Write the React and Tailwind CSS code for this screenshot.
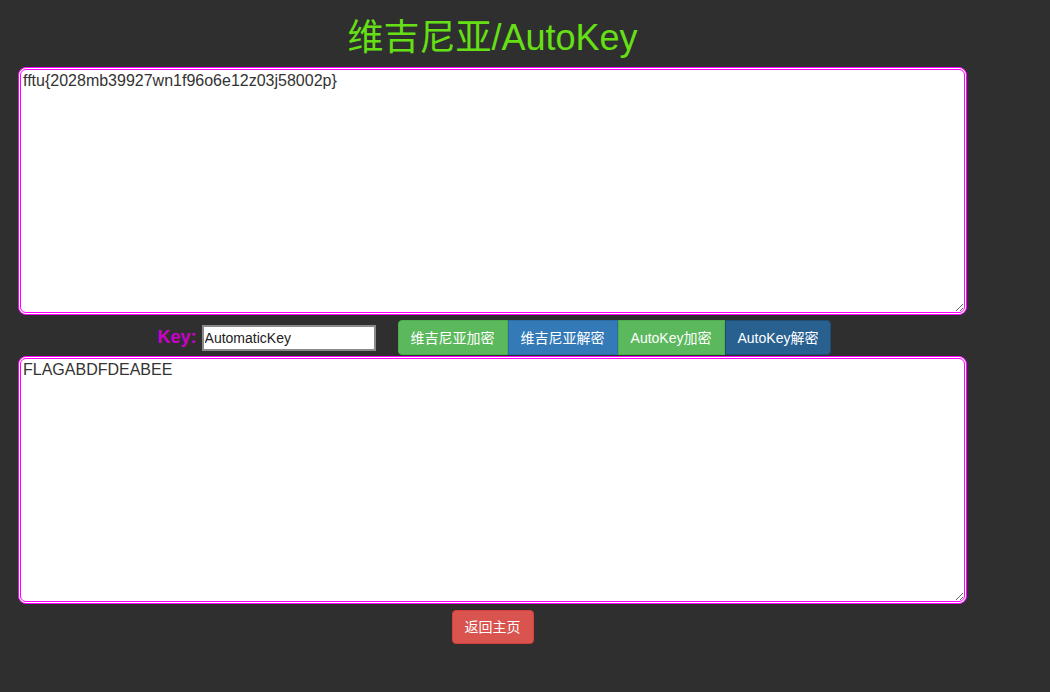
import React, { useState } from "react";

const FONT = {
  fontFamily: '"Liberation Sans", Arial, "Noto Sans CJK SC", sans-serif',
};

export default function App() {
  const [input, setInput] = useState("fftu{2028mb39927wn1f96o6e12z03j58002p}");
  const [key, setKey] = useState("AutomaticKey");
  const [output, setOutput] = useState("FLAGABDFDEABEE");

  return (
    <div className="min-h-[692px] w-full bg-[#2f2f2f]" style={FONT}>
      <div className="ml-[18px] w-[949px]">
        {/* 标题 */}
        <h1 className="flex h-[67px] items-center justify-center pt-[8px] text-[36px] leading-none text-[#66e014]">
          维吉尼亚/AutoKey
        </h1>

        {/* 输入 */}
        <textarea
          value={input}
          onChange={(e) => setInput(e.target.value)}
          spellCheck={false}
          className="block h-[248px] w-full rounded-[8px] border-[3px] border-double border-[#ff00ff] bg-white px-[2px] py-[2px] text-[16px] leading-[18px] text-[#333] outline-none"
          style={FONT}
        />

        {/* Key + 按钮 */}
        <div className="mt-[5px] flex h-[35px] items-center justify-center pl-[4px]">
          <span className="text-[18px] font-bold text-[#cc00cc]">Key:</span>
          <input
            value={key}
            onChange={(e) => setKey(e.target.value)}
            className="ml-[5px] h-[26px] w-[174px] border-2 border-[#8a8a8a] bg-white px-[1px] text-[14px] text-[#222] outline-none"
            style={FONT}
          />
          <div className="ml-[22px] flex h-[35px] text-[14px] text-white">
            <button className="rounded-l-[4px] border border-[#4cae4c] bg-[#5cb85c] px-3 leading-[20px]">
              维吉尼亚加密
            </button>
            <button className="border border-[#2e6da4] bg-[#337ab7] px-3 leading-[20px]">
              维吉尼亚解密
            </button>
            <button className="border border-[#4cae4c] bg-[#5cb85c] px-3 leading-[20px]">
              AutoKey加密
            </button>
            <button className="rounded-r-[4px] border border-[#204d74] bg-[#286090] px-3 leading-[20px]">
              AutoKey解密
            </button>
          </div>
        </div>

        {/* 输出 */}
        <textarea
          value={output}
          onChange={(e) => setOutput(e.target.value)}
          spellCheck={false}
          className="mt-px block h-[248px] w-full rounded-[8px] border-[3px] border-double border-[#ff00ff] bg-white px-[2px] py-[2px] text-[16px] leading-[18px] text-[#333] outline-none"
          style={FONT}
        />

        <div className="mt-[6px] flex justify-center">
          <button className="h-[34px] rounded-[4px] border border-[#d43f3a] bg-[#d9534f] px-3 text-[14px] leading-[20px] text-white">
            返回主页
          </button>
        </div>
      </div>
    </div>
  );
}
